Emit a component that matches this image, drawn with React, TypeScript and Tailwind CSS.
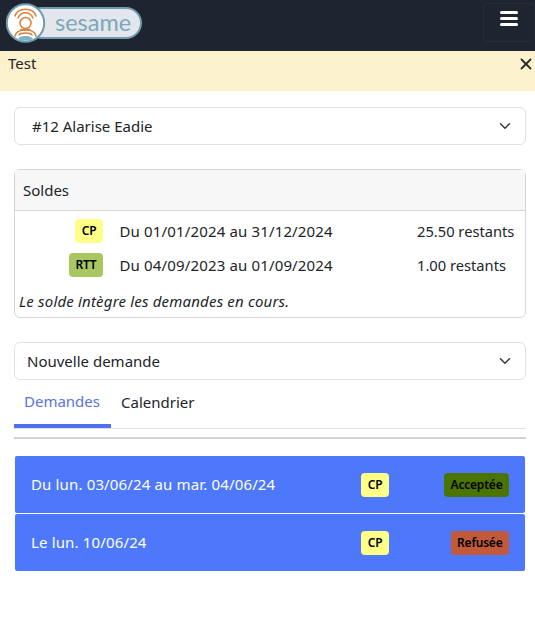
import { ChevronDown, X } from "lucide-react"

function Logo() {
  return (
    <div className="relative h-[40px] w-[136px]">
      <div className="absolute left-[20px] top-[4px] flex h-[32px] w-[116px] items-center rounded-full border-2 border-[#6f9cae] bg-[#e3e6ec] pl-[27px]">
        <span className="text-[23.5px] leading-none text-[#7ca9b8] font-['Lato',sans-serif]">sesame</span>
      </div>
      <svg viewBox="0 0 40 40" className="absolute left-0 top-0 h-[40px] w-[40px]">
        <circle cx="19.5" cy="20" r="18.7" fill="#fff" stroke="#6f9cae" strokeWidth="2" />
        <g fill="none" stroke="#d9813f" strokeWidth="1.5" strokeLinecap="round">
          <path d="M9 13C12 4 27 4 30 13" />
          <path d="M12 15C15 8 24 8 27 15" />
          <circle cx="19.5" cy="20" r="5.5" />
          <path d="M15 26.5h9" />
          <path d="M9 33C10 28 15 27 19.5 27S29 28 30 33" />
          <path d="M13 32C14 30 17 30 19.5 30S25 30 26 32" />
        </g>
        <path d="M12 36C14 33 17 33 19.5 33S25 33 27 36C23 38 16 38 12 36Z" fill="#7ab4c9" />
      </svg>
    </div>
  )
}

function Select({ label, className }: { label: string; className: string }) {
  return (
    <div className={`flex h-[38px] items-center justify-between rounded-md border border-[#dee2e6] bg-white pr-[11px] text-[#212529] ${className}`}>
      <span>{label}</span>
      <ChevronDown className="h-[18px] w-[18px] text-[#343a40]" strokeWidth={2} />
    </div>
  )
}

function Tag({ label, color }: { label: string; color: string }) {
  return (
    <span className={`inline-flex h-[24px] min-w-[28px] items-center justify-center rounded-[4px] px-[6.5px] text-[12px] font-semibold tracking-[-0.2px] text-black ${color}`}>
      {label}
    </span>
  )
}

function Solde({ tag, color, period, rest }: { tag: string; color: string; period: string; rest: string }) {
  return (
    <div className="flex h-[34px] items-center">
      <div className="flex w-[88px] justify-end">
        <Tag label={tag} color={color} />
      </div>
      <span className="ml-[16.5px] w-[297.5px] tracking-[0.15px]">{period}</span>
      <span className="text-[14.7px]">{rest}</span>
    </div>
  )
}

function Demande({ label, status, color }: { label: string; status: string; color: string }) {
  return (
    <div className="flex h-[57px] items-center rounded-[2px] bg-[#4d78fb] pr-[16px] text-white">
      <span className="ml-[16px] w-[330px] tracking-[0.15px]">{label}</span>
      <Tag label="CP" color="bg-[#ffff88]" />
      <div className="flex flex-1 justify-end">
        <Tag label={status} color={color} />
      </div>
    </div>
  )
}

export default function App() {
  return (
    <div className="min-h-[634px] bg-white text-[15px] text-[#212529] font-['Noto_Sans',sans-serif]">
      <header className="flex h-[51px] items-start justify-between bg-[#1e2530] pl-[6px] pt-[3px]">
        <Logo />
        <div className="flex h-[39px] w-[52px] flex-col items-center rounded-sm border border-[#262d38] pt-[7px]">
          <div className="flex w-[18px] flex-col gap-[3px]">
            <div className="h-[3px] rounded-full bg-white" />
            <div className="h-[3px] rounded-full bg-white" />
            <div className="h-[3px] rounded-full bg-white" />
          </div>
        </div>
      </header>

      <div className="flex h-[40px] items-start justify-between bg-[#fbf1cd] pl-[8px] pt-[1px]">
        <span>Test</span>
        <X className="mt-[3px] h-[18px] w-[18px] text-[#2b2b2b]" strokeWidth={2.4} />
      </div>

      <main className="pl-[14px] pr-[9px] pt-[16px]">
        <Select label="#12 Alarise Eadie" className="pl-[17px]" />

        <section className="mt-[24px] h-[149px] rounded-md border border-[#d4d6d9]">
          <div className="flex h-[41px] items-center border-b border-[#d4d6d9] bg-[#f7f7f7] pl-[8px]">Soldes</div>
          <div className="pt-[3px]">
            <Solde tag="CP" color="bg-[#ffff88]" period="Du 01/01/2024 au 31/12/2024" rest="25.50 restants" />
            <Solde tag="RTT" color="bg-[#a9c760]" period="Du 04/09/2023 au 01/09/2024" rest="1.00 restants" />
          </div>
          <p className="mt-[8px] pl-[4px] italic tracking-[0.18px]">Le solde intègre les demandes en cours.</p>
        </section>

        <Select label="Nouvelle demande" className="mt-[24px] pl-[12px]" />

        <nav className="flex h-[49px] border-b border-[#dee2e6]">
          <span className="flex h-[48px] w-[97px] items-center justify-center border-b-[4px] border-[#4d6ff0] pb-[1px] pr-[1px] text-[#5a73e0]">Demandes</span>
          <span className="flex h-[44px] items-center pl-[10px]">Calendrier</span>
        </nav>

        <hr className="mt-[8px] border-t-2 border-[#d2d2d2]" />

        <div className="mx-[1px] mt-[17px] flex flex-col gap-[1px]">
          <Demande label="Du lun. 03/06/24 au mar. 04/06/24" status="Acceptée" color="bg-[#4b7400]" />
          <Demande label="Le lun. 10/06/24" status="Refusée" color="bg-[#c2593b]" />
        </div>
      </main>
    </div>
  )
}
